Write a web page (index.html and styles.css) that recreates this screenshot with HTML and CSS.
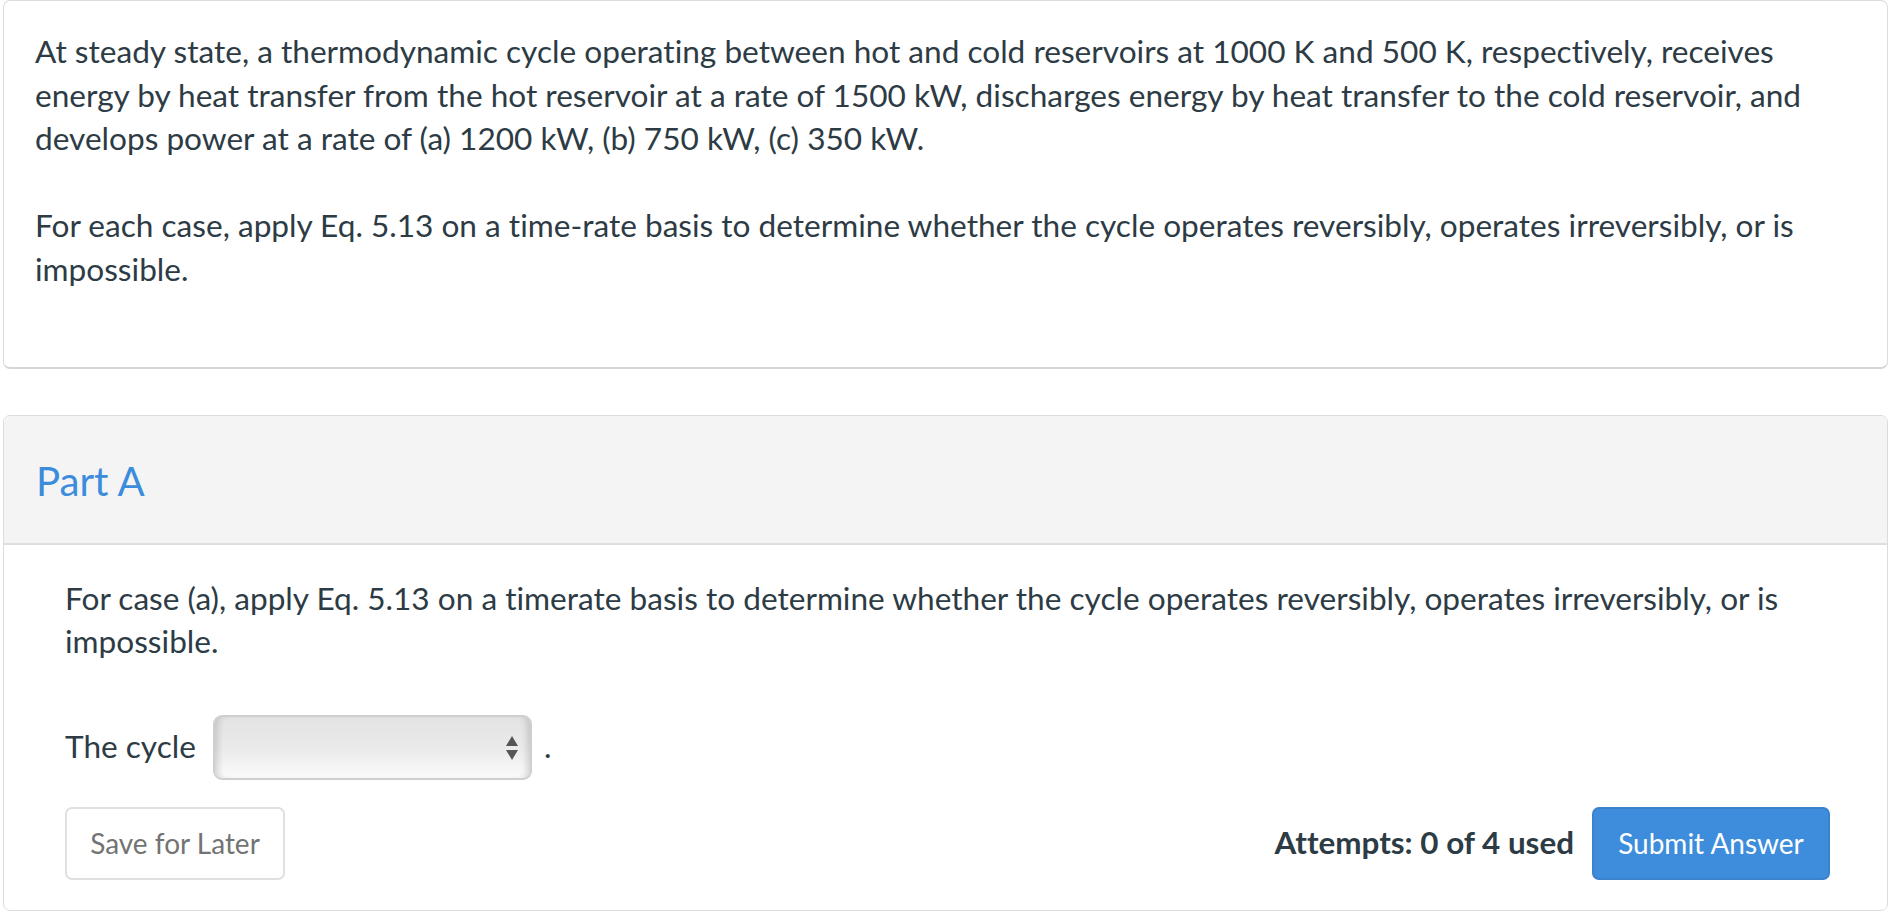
FILE: index.html
```html
<!DOCTYPE html>
<html lang="en">
<head>
<meta charset="utf-8">
<title>Problem</title>
<link rel="stylesheet" href="styles.css">
</head>
<body>
<div class="page">
  <section class="card intro">
    <p>At steady state, a thermodynamic cycle operating between hot and cold reservoirs at 1000 K and 500 K, respectively, receives energy by heat transfer from the hot reservoir at a rate of 1500 kW, discharges energy by heat transfer to the cold reservoir, and develops power at a rate of (a) 1200 kW, (b) 750 kW, (c) 350 kW.</p>
    <p>For each case, apply Eq. 5.13 on a time-rate basis to determine whether the cycle operates reversibly, operates irreversibly, or is impossible.</p>
  </section>

  <section class="card part">
    <header class="part-head">
      <h2 class="part-title">Part A</h2>
    </header>
    <div class="part-body">
      <p>For case (a), apply Eq. 5.13 on a timerate basis to determine whether the cycle operates reversibly, operates irreversibly, or is impossible.</p>
      <div class="answer-row">
        <span class="answer-label">The cycle</span>
        <span class="select-wrap">
          <select class="select" aria-label="The cycle">
            <option></option>
            <option>operates reversibly</option>
            <option>operates irreversibly</option>
            <option>is impossible</option>
          </select>
          <svg class="select-arrows" width="12" height="24" viewBox="0 0 12 24" aria-hidden="true">
            <path d="M6 0 L12 10 L0 10 Z" fill="#555"/>
            <path d="M0 14 L12 14 L6 24 Z" fill="#555"/>
          </svg>
        </span>
        <span class="answer-dot">.</span>
      </div>
      <div class="actions">
        <button class="btn btn-save" type="button">Save for Later</button>
        <div class="actions-right">
          <span class="attempts">Attempts: 0 of 4 used</span>
          <button class="btn btn-submit" type="button">Submit Answer</button>
        </div>
      </div>
    </div>
  </section>
</div>
</body>
</html>
```
FILE: styles.css
```css
html, body {
  margin: 0;
  padding: 0;
  background: #ffffff;
}

body {
  font-family: Lato, "Open Sans", "Liberation Sans", sans-serif;
  font-size: 31.6px;
  line-height: 43.5px;
  color: #2d3b45;
  font-variant-ligatures: none;
}

.page {
  padding: 0 2px 0 3px;
}

.card {
  background: #ffffff;
  border: 1px solid #dcdcdc;
  border-radius: 7px;
}

.intro {
  padding: 29px 31px 32px 31px;
  border-bottom: 2px solid #d6d6d6;
}

.intro p {
  margin: 0 0 43.5px 0;
}

.part {
  margin-top: 46px;
  overflow: hidden;
}

.part-head {
  background: #f4f4f4;
  height: 127px;
  border-bottom: 2px solid #dedede;
  display: flex;
  align-items: center;
  padding: 0 32px;
}

.part-title {
  margin: 4px 0 0 0;
  font-size: 40.2px;
  font-weight: 400;
  color: #3c8cdc;
  line-height: 1.2;
}

.part-body {
  padding: 32px 57px 30px 61px;
}

.part-body p {
  margin: 0;
}

.answer-row {
  display: flex;
  align-items: center;
  margin-top: 51px;
  height: 65px;
}

.answer-label {
  margin-right: 17px;
  white-space: nowrap;
}

.select-wrap {
  position: relative;
  display: inline-block;
  width: 319px;
  height: 65px;
}

.select {
  appearance: none;
  -webkit-appearance: none;
  width: 100%;
  height: 100%;
  margin: 0;
  border: 2px solid #cfcfcf;
  border-radius: 9px;
  background: linear-gradient(to bottom, #e3e3e3 0%, #eaeaea 50%, #fafafa 100%);
  box-shadow: inset 7px 0 6px -4px rgba(0, 0, 0, 0.14), inset -7px 0 6px -4px rgba(0, 0, 0, 0.14);
  font-family: inherit;
  font-size: 28px;
  color: #2d3b45;
}

.select-arrows {
  position: absolute;
  right: 14px;
  top: 21px;
  pointer-events: none;
}

.answer-dot {
  margin-left: 12px;
}

.actions {
  display: flex;
  justify-content: space-between;
  align-items: center;
  margin-top: 27px;
}

.actions-right {
  display: flex;
  align-items: center;
  gap: 18px;
}

.btn {
  font-family: inherit;
  font-size: 28px;
  line-height: 1;
  height: 73px;
  border-radius: 7px;
  cursor: pointer;
  white-space: nowrap;
  font-variant-ligatures: none;
}

.btn-save {
  background: #ffffff;
  color: #737373;
  border: 2px solid #e0e0e0;
  padding: 0;
  width: 220px;
}

.attempts {
  font-weight: 700;
  font-size: 31.4px;
  color: #2d3b45;
  white-space: nowrap;
}

.btn-submit {
  background: #3e8ddd;
  color: #ffffff;
  border: 2px solid #3a83cc;
  width: 238px;
  padding: 0;
}
```
